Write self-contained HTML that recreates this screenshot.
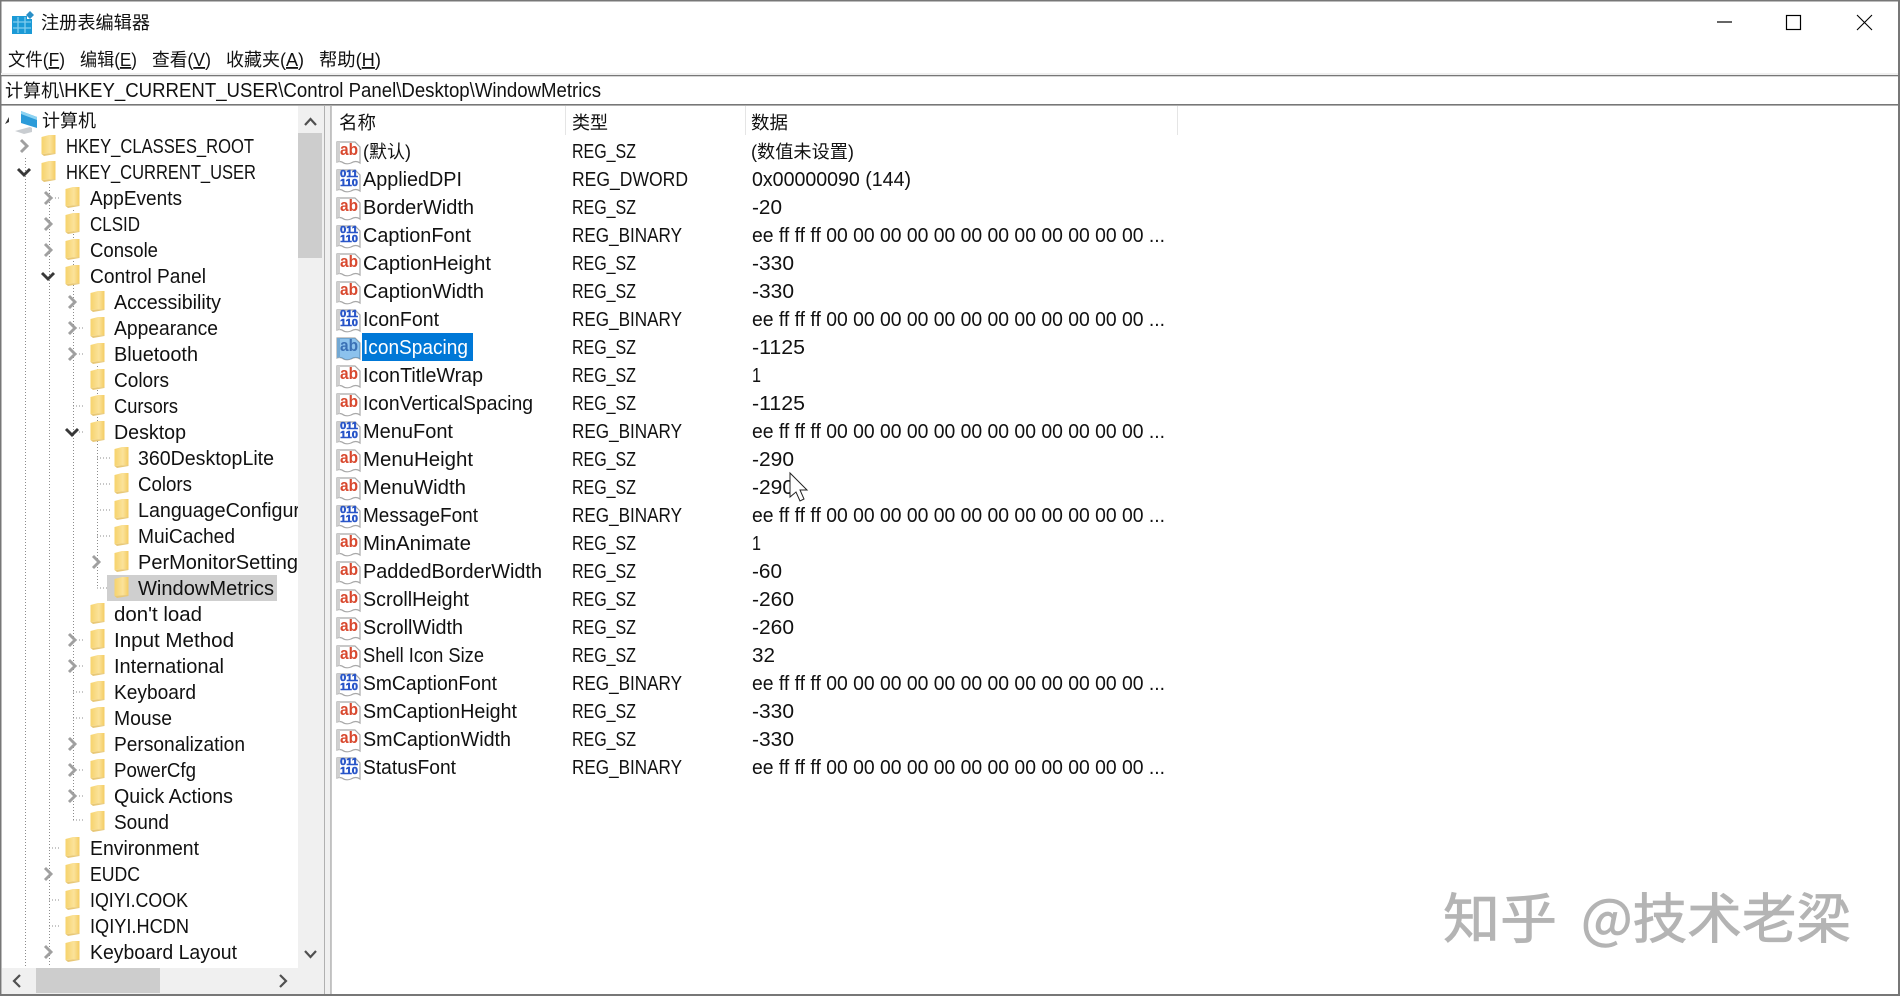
<!DOCTYPE html>
<html lang="zh"><head><meta charset="utf-8"><title>注册表编辑器</title>
<style>
html,body{margin:0;padding:0;width:1900px;height:996px;overflow:hidden;background:#fff}
svg{display:block;font-family:"Liberation Sans","Noto Sans CJK SC",sans-serif;font-size:20px;fill:#111}
.c{font-size:18px;font-family:"Noto Sans CJK SC","Liberation Sans",sans-serif}
.m{font-size:18px}
.ab{font-size:17px;font-weight:bold;fill:#d8482e}
.bi{font-size:10.5px;font-weight:bold;fill:#2855c8;stroke:#2855c8;stroke-width:.5}
</style></head><body>
<svg xmlns="http://www.w3.org/2000/svg" width="1900" height="996" viewBox="0 0 1900 996">
<defs>
<linearGradient id="g" x1="0" x2="1" y1="0" y2="0"><stop offset="0" stop-color="#f6d36c"/><stop offset=".6" stop-color="#fbe29a"/><stop offset="1" stop-color="#f4cc62"/></linearGradient>
<symbol id="f" width="16" height="24" viewBox="0 1 16 24"><path d="M0.5 4 L8 2 L14.5 2 L14.5 20 L0.5 21 Z" fill="url(#g)"/><path d="M0.5 21 L14.5 20 L14.5 21 L3 23 Z" fill="#e8c877"/></symbol>
<symbol id="cc" width="14" height="16" viewBox="0 0 14 16"><path d="M4 2 L10 8 L4 14" fill="none" stroke="#a0a0a0" stroke-width="2.9"/></symbol>
<symbol id="co" width="16" height="12" viewBox="0 0 16 12"><path d="M2 3 L8 9 L14 3" fill="none" stroke="#383838" stroke-width="2.9"/></symbol>
<symbol id="p" width="26" height="26" viewBox="0 0 26 26"><path d="M1 3 H19 L24 8 V24 Q20 21 15 24 Q10 26 6 23 Q3 22 1 23 Z" fill="#fff" stroke="#a8a8a8" stroke-width="1.2"/><path d="M1 3 V23 Q3 22 4 23 V3 Z" fill="#d0d0d0"/></symbol>
</defs>

<!-- frame -->
<rect x="0" y="0" width="1900" height="1.5" fill="#777"/>
<rect x="0" y="0" width="1.5" height="996" fill="#777"/>
<rect x="1898" y="0" width="2" height="996" fill="#777"/>
<rect x="0" y="994" width="1900" height="2" fill="#777"/>

<!-- title -->
<rect x="12" y="16" width="20" height="18" fill="#1b9ad6"/>
<path d="M13 22H31M13 28H31M18 17V33M25 17V33" stroke="#7fcdee" stroke-width="1.3"/>
<rect x="27" y="12" width="7" height="7" fill="#fff"/>
<path d="M30 11 L34 15 L30 19 L26 15 Z" fill="#2a8fc7"/>
<text class="c" x="41" y="29" textLength="109" lengthAdjust="spacingAndGlyphs">注册表编辑器</text>
<path d="M1717 22H1732" stroke="#000" stroke-width="1.2"/>
<rect x="1786.5" y="15.5" width="14" height="14" fill="none" stroke="#000" stroke-width="1.2"/>
<path d="M1857 15L1872 30M1872 15L1857 30" stroke="#000" stroke-width="1.1"/>

<!-- menu -->
<g class="m">
<text x="8" y="66" textLength="57" lengthAdjust="spacingAndGlyphs">文件(<tspan text-decoration="underline">F</tspan>)</text>
<text x="80" y="66" textLength="57" lengthAdjust="spacingAndGlyphs">编辑(<tspan text-decoration="underline">E</tspan>)</text>
<text x="152" y="66" textLength="59" lengthAdjust="spacingAndGlyphs">查看(<tspan text-decoration="underline">V</tspan>)</text>
<text x="226" y="66" textLength="78" lengthAdjust="spacingAndGlyphs">收藏夹(<tspan text-decoration="underline">A</tspan>)</text>
<text x="319" y="66" textLength="62" lengthAdjust="spacingAndGlyphs">帮助(<tspan text-decoration="underline">H</tspan>)</text>
</g>
<rect x="1" y="73" width="1897" height="2" fill="#f0f0f0"/>
<rect x="0" y="75" width="1900" height="1.3" fill="#777"/>
<text class="c" x="5" y="97" textLength="54" lengthAdjust="spacingAndGlyphs">计算机</text>
<text x="59" y="97" textLength="542" lengthAdjust="spacingAndGlyphs">\HKEY_CURRENT_USER\Control Panel\Desktop\WindowMetrics</text>
<rect x="0" y="104" width="1900" height="1.6" fill="#777"/>

<!-- divider -->
<rect x="324" y="106" width="7" height="888" fill="#f0f0f0"/>
<rect x="324" y="106" width="1" height="888" fill="#b0b0b0"/>
<rect x="330.5" y="106" width="1" height="888" fill="#909090"/>

<!-- tree lines -->
<g fill="none" stroke="#8c8c8c" stroke-width="1" stroke-dasharray="1 2">
<path d="M25.5 158V966M49.5 184V966M73.5 210V820M97.5 366V588"/>
<path d="M73 328H85M73 354H85M73 406H85M73 432H85M73 640H85M73 692H85M73 718H85M73 770H85M73 796H85M73 820H85M49 848H61M49 900H61M49 926H61M97 458H110M97 484H110M97 510H110M97 536H110M97 588H110M73 666H85"/>
<path d="M49 198H61"/>
</g>

<!-- selection tree -->
<rect x="107" y="575" width="170" height="26" fill="#cfcfcf"/>

<!-- tree root -->
<path d="M5 124 L9 117 L9 122 Z" fill="#333"/>
<path d="M21 111 L37 117 L37 128 L21 123 Z" fill="#2b9bd9"/>
<path d="M21 111 L37 117 L37 120 L21 114 Z" fill="#8dd3f2"/>
<path d="M30 127 L32 128 L32 132 L24 134 L15 131 L26 128Z" fill="#c9cdd1"/>
<text class="c" x="42" y="127" textLength="54" lengthAdjust="spacingAndGlyphs">计算机</text>

<!-- tree chevrons -->
<use href="#cc" x="17" y="138"/>
<use href="#co" x="16" y="166"/>
<use href="#cc" x="41" y="190"/>
<use href="#cc" x="41" y="216"/>
<use href="#cc" x="41" y="242"/>
<use href="#co" x="40" y="270"/>
<use href="#cc" x="65" y="294"/>
<use href="#cc" x="65" y="320"/>
<use href="#cc" x="65" y="346"/>
<use href="#co" x="64" y="426"/>
<use href="#cc" x="89" y="554"/>
<use href="#cc" x="65" y="632"/>
<use href="#cc" x="65" y="658"/>
<use href="#cc" x="65" y="736"/>
<use href="#cc" x="65" y="762"/>
<use href="#cc" x="65" y="788"/>
<use href="#cc" x="41" y="866"/>
<use href="#cc" x="41" y="944"/>

<!-- tree folders -->
<use href="#f" x="41" y="134"/><use href="#f" x="41" y="160"/>
<use href="#f" x="65" y="186"/><use href="#f" x="65" y="212"/><use href="#f" x="65" y="238"/><use href="#f" x="65" y="264"/>
<use href="#f" x="90" y="290"/><use href="#f" x="90" y="316"/><use href="#f" x="90" y="342"/><use href="#f" x="90" y="368"/><use href="#f" x="90" y="394"/><use href="#f" x="90" y="420"/>
<use href="#f" x="114" y="446"/><use href="#f" x="114" y="472"/><use href="#f" x="114" y="498"/><use href="#f" x="114" y="524"/><use href="#f" x="114" y="550"/><use href="#f" x="114" y="576"/>
<use href="#f" x="90" y="602"/><use href="#f" x="90" y="628"/><use href="#f" x="90" y="654"/><use href="#f" x="90" y="680"/><use href="#f" x="90" y="706"/><use href="#f" x="90" y="732"/><use href="#f" x="90" y="758"/><use href="#f" x="90" y="784"/><use href="#f" x="90" y="810"/>
<use href="#f" x="65" y="836"/><use href="#f" x="65" y="862"/><use href="#f" x="65" y="888"/><use href="#f" x="65" y="914"/><use href="#f" x="65" y="940"/>

<!-- tree text -->
<text x="66" y="153" textLength="188" lengthAdjust="spacingAndGlyphs">HKEY_CLASSES_ROOT</text>
<text x="66" y="179" textLength="190" lengthAdjust="spacingAndGlyphs">HKEY_CURRENT_USER</text>
<text x="90" y="205" textLength="92" lengthAdjust="spacingAndGlyphs">AppEvents</text>
<text x="90" y="231" textLength="50" lengthAdjust="spacingAndGlyphs">CLSID</text>
<text x="90" y="257" textLength="68" lengthAdjust="spacingAndGlyphs">Console</text>
<text x="90" y="283" textLength="116" lengthAdjust="spacingAndGlyphs">Control Panel</text>
<text x="114" y="309" textLength="107" lengthAdjust="spacingAndGlyphs">Accessibility</text>
<text x="114" y="335" textLength="104" lengthAdjust="spacingAndGlyphs">Appearance</text>
<text x="114" y="361" textLength="84" lengthAdjust="spacingAndGlyphs">Bluetooth</text>
<text x="114" y="387" textLength="55" lengthAdjust="spacingAndGlyphs">Colors</text>
<text x="114" y="413" textLength="64" lengthAdjust="spacingAndGlyphs">Cursors</text>
<text x="114" y="439" textLength="72" lengthAdjust="spacingAndGlyphs">Desktop</text>
<text x="138" y="465" textLength="136" lengthAdjust="spacingAndGlyphs">360DesktopLite</text>
<text x="138" y="491" textLength="54" lengthAdjust="spacingAndGlyphs">Colors</text>
<text x="138" y="517" textLength="162" lengthAdjust="spacingAndGlyphs">LanguageConfigur</text>
<text x="138" y="543" textLength="97" lengthAdjust="spacingAndGlyphs">MuiCached</text>
<text x="138" y="569" textLength="160" lengthAdjust="spacingAndGlyphs">PerMonitorSetting</text>
<text x="138" y="595" textLength="136" lengthAdjust="spacingAndGlyphs">WindowMetrics</text>
<text x="114" y="621" textLength="88" lengthAdjust="spacingAndGlyphs">don't load</text>
<text x="114" y="647" textLength="120" lengthAdjust="spacingAndGlyphs">Input Method</text>
<text x="114" y="673" textLength="110" lengthAdjust="spacingAndGlyphs">International</text>
<text x="114" y="699" textLength="82" lengthAdjust="spacingAndGlyphs">Keyboard</text>
<text x="114" y="725" textLength="58" lengthAdjust="spacingAndGlyphs">Mouse</text>
<text x="114" y="751" textLength="131" lengthAdjust="spacingAndGlyphs">Personalization</text>
<text x="114" y="777" textLength="82" lengthAdjust="spacingAndGlyphs">PowerCfg</text>
<text x="114" y="803" textLength="119" lengthAdjust="spacingAndGlyphs">Quick Actions</text>
<text x="114" y="829" textLength="55" lengthAdjust="spacingAndGlyphs">Sound</text>
<text x="90" y="855" textLength="109" lengthAdjust="spacingAndGlyphs">Environment</text>
<text x="90" y="881" textLength="50" lengthAdjust="spacingAndGlyphs">EUDC</text>
<text x="90" y="907" textLength="98" lengthAdjust="spacingAndGlyphs">IQIYI.COOK</text>
<text x="90" y="933" textLength="99" lengthAdjust="spacingAndGlyphs">IQIYI.HCDN</text>
<text x="90" y="959" textLength="147" lengthAdjust="spacingAndGlyphs">Keyboard Layout</text>

<!-- scrollbars -->
<rect x="298" y="106" width="26" height="862" fill="#f0f0f0"/>
<rect x="298" y="133" width="24" height="125" fill="#cdcdcd"/>
<path d="M305 125 L310.5 119 L316 125" fill="none" stroke="#505050" stroke-width="2.2"/>
<path d="M305 951 L310.5 957 L316 951" fill="none" stroke="#505050" stroke-width="2.2"/>
<rect x="2" y="968" width="322" height="26" fill="#f0f0f0"/>
<rect x="36" y="968" width="124" height="25" fill="#cdcdcd"/>
<path d="M20 975 L14 981 L20 987" fill="none" stroke="#505050" stroke-width="2.2"/>
<path d="M280 975 L286 981 L280 987" fill="none" stroke="#505050" stroke-width="2.2"/>

<!-- list header -->
<path d="M565.5 106V135M745.5 106V135M1177.5 106V135" stroke="#e5e5e5"/>
<text class="c" x="339" y="129" textLength="37" lengthAdjust="spacingAndGlyphs">名称</text>
<text class="c" x="572" y="129" textLength="36" lengthAdjust="spacingAndGlyphs">类型</text>
<text class="c" x="751" y="129" textLength="37" lengthAdjust="spacingAndGlyphs">数据</text>

<!-- selected row -->
<rect x="362" y="333" width="111" height="28" fill="#0078d7"/>

<!-- list icons -->
<g>
<use href="#p" x="336" y="139"/><text class="ab" x="340" y="155" textLength="18" lengthAdjust="spacingAndGlyphs">ab</text>
<use href="#p" x="336" y="167"/><text class="bi" x="340" y="177" textLength="18" lengthAdjust="spacingAndGlyphs">011</text><text class="bi" x="340" y="186" textLength="18" lengthAdjust="spacingAndGlyphs">110</text>
<use href="#p" x="336" y="195"/><text class="ab" x="340" y="211" textLength="18" lengthAdjust="spacingAndGlyphs">ab</text>
<use href="#p" x="336" y="223"/><text class="bi" x="340" y="233" textLength="18" lengthAdjust="spacingAndGlyphs">011</text><text class="bi" x="340" y="242" textLength="18" lengthAdjust="spacingAndGlyphs">110</text>
<use href="#p" x="336" y="251"/><text class="ab" x="340" y="267" textLength="18" lengthAdjust="spacingAndGlyphs">ab</text>
<use href="#p" x="336" y="279"/><text class="ab" x="340" y="295" textLength="18" lengthAdjust="spacingAndGlyphs">ab</text>
<use href="#p" x="336" y="307"/><text class="bi" x="340" y="317" textLength="18" lengthAdjust="spacingAndGlyphs">011</text><text class="bi" x="340" y="326" textLength="18" lengthAdjust="spacingAndGlyphs">110</text>
<use href="#p" x="336" y="335"/><text class="ab" x="340" y="351" textLength="18" lengthAdjust="spacingAndGlyphs" style="fill:#6a6a9a">ab</text>
<path d="M337 338 H355 L360 343 V359 Q356 356 351 359 Q346 361 342 358 Q339 357 337 358 Z" fill="#0078d7" opacity=".45"/>
<use href="#p" x="336" y="363"/><text class="ab" x="340" y="379" textLength="18" lengthAdjust="spacingAndGlyphs">ab</text>
<use href="#p" x="336" y="391"/><text class="ab" x="340" y="407" textLength="18" lengthAdjust="spacingAndGlyphs">ab</text>
<use href="#p" x="336" y="419"/><text class="bi" x="340" y="429" textLength="18" lengthAdjust="spacingAndGlyphs">011</text><text class="bi" x="340" y="438" textLength="18" lengthAdjust="spacingAndGlyphs">110</text>
<use href="#p" x="336" y="447"/><text class="ab" x="340" y="463" textLength="18" lengthAdjust="spacingAndGlyphs">ab</text>
<use href="#p" x="336" y="475"/><text class="ab" x="340" y="491" textLength="18" lengthAdjust="spacingAndGlyphs">ab</text>
<use href="#p" x="336" y="503"/><text class="bi" x="340" y="513" textLength="18" lengthAdjust="spacingAndGlyphs">011</text><text class="bi" x="340" y="522" textLength="18" lengthAdjust="spacingAndGlyphs">110</text>
<use href="#p" x="336" y="531"/><text class="ab" x="340" y="547" textLength="18" lengthAdjust="spacingAndGlyphs">ab</text>
<use href="#p" x="336" y="559"/><text class="ab" x="340" y="575" textLength="18" lengthAdjust="spacingAndGlyphs">ab</text>
<use href="#p" x="336" y="587"/><text class="ab" x="340" y="603" textLength="18" lengthAdjust="spacingAndGlyphs">ab</text>
<use href="#p" x="336" y="615"/><text class="ab" x="340" y="631" textLength="18" lengthAdjust="spacingAndGlyphs">ab</text>
<use href="#p" x="336" y="643"/><text class="ab" x="340" y="659" textLength="18" lengthAdjust="spacingAndGlyphs">ab</text>
<use href="#p" x="336" y="671"/><text class="bi" x="340" y="681" textLength="18" lengthAdjust="spacingAndGlyphs">011</text><text class="bi" x="340" y="690" textLength="18" lengthAdjust="spacingAndGlyphs">110</text>
<use href="#p" x="336" y="699"/><text class="ab" x="340" y="715" textLength="18" lengthAdjust="spacingAndGlyphs">ab</text>
<use href="#p" x="336" y="727"/><text class="ab" x="340" y="743" textLength="18" lengthAdjust="spacingAndGlyphs">ab</text>
<use href="#p" x="336" y="755"/><text class="bi" x="340" y="765" textLength="18" lengthAdjust="spacingAndGlyphs">011</text><text class="bi" x="340" y="774" textLength="18" lengthAdjust="spacingAndGlyphs">110</text>
</g>

<!-- names -->
<text class="m" x="363" y="158" textLength="48" lengthAdjust="spacingAndGlyphs">(默认)</text>
<text x="363" y="186" textLength="99" lengthAdjust="spacingAndGlyphs">AppliedDPI</text>
<text x="363" y="214" textLength="111" lengthAdjust="spacingAndGlyphs">BorderWidth</text>
<text x="363" y="242" textLength="108" lengthAdjust="spacingAndGlyphs">CaptionFont</text>
<text x="363" y="270" textLength="128" lengthAdjust="spacingAndGlyphs">CaptionHeight</text>
<text x="363" y="298" textLength="121" lengthAdjust="spacingAndGlyphs">CaptionWidth</text>
<text x="363" y="326" textLength="76" lengthAdjust="spacingAndGlyphs">IconFont</text>
<text x="363" y="354" textLength="105" lengthAdjust="spacingAndGlyphs" style="fill:#fff">IconSpacing</text>
<text x="363" y="382" textLength="120" lengthAdjust="spacingAndGlyphs">IconTitleWrap</text>
<text x="363" y="410" textLength="170" lengthAdjust="spacingAndGlyphs">IconVerticalSpacing</text>
<text x="363" y="438" textLength="90" lengthAdjust="spacingAndGlyphs">MenuFont</text>
<text x="363" y="466" textLength="110" lengthAdjust="spacingAndGlyphs">MenuHeight</text>
<text x="363" y="494" textLength="103" lengthAdjust="spacingAndGlyphs">MenuWidth</text>
<text x="363" y="522" textLength="115" lengthAdjust="spacingAndGlyphs">MessageFont</text>
<text x="363" y="550" textLength="108" lengthAdjust="spacingAndGlyphs">MinAnimate</text>
<text x="363" y="578" textLength="179" lengthAdjust="spacingAndGlyphs">PaddedBorderWidth</text>
<text x="363" y="606" textLength="106" lengthAdjust="spacingAndGlyphs">ScrollHeight</text>
<text x="363" y="634" textLength="100" lengthAdjust="spacingAndGlyphs">ScrollWidth</text>
<text x="363" y="662" textLength="121" lengthAdjust="spacingAndGlyphs">Shell Icon Size</text>
<text x="363" y="690" textLength="134" lengthAdjust="spacingAndGlyphs">SmCaptionFont</text>
<text x="363" y="718" textLength="154" lengthAdjust="spacingAndGlyphs">SmCaptionHeight</text>
<text x="363" y="746" textLength="148" lengthAdjust="spacingAndGlyphs">SmCaptionWidth</text>
<text x="363" y="774" textLength="93" lengthAdjust="spacingAndGlyphs">StatusFont</text>

<!-- types -->
<text x="572" y="158" textLength="64" lengthAdjust="spacingAndGlyphs">REG_SZ</text>
<text x="572" y="186" textLength="116" lengthAdjust="spacingAndGlyphs">REG_DWORD</text>
<text x="572" y="214" textLength="64" lengthAdjust="spacingAndGlyphs">REG_SZ</text>
<text x="572" y="242" textLength="110" lengthAdjust="spacingAndGlyphs">REG_BINARY</text>
<text x="572" y="270" textLength="64" lengthAdjust="spacingAndGlyphs">REG_SZ</text>
<text x="572" y="298" textLength="64" lengthAdjust="spacingAndGlyphs">REG_SZ</text>
<text x="572" y="326" textLength="110" lengthAdjust="spacingAndGlyphs">REG_BINARY</text>
<text x="572" y="354" textLength="64" lengthAdjust="spacingAndGlyphs">REG_SZ</text>
<text x="572" y="382" textLength="64" lengthAdjust="spacingAndGlyphs">REG_SZ</text>
<text x="572" y="410" textLength="64" lengthAdjust="spacingAndGlyphs">REG_SZ</text>
<text x="572" y="438" textLength="110" lengthAdjust="spacingAndGlyphs">REG_BINARY</text>
<text x="572" y="466" textLength="64" lengthAdjust="spacingAndGlyphs">REG_SZ</text>
<text x="572" y="494" textLength="64" lengthAdjust="spacingAndGlyphs">REG_SZ</text>
<text x="572" y="522" textLength="110" lengthAdjust="spacingAndGlyphs">REG_BINARY</text>
<text x="572" y="550" textLength="64" lengthAdjust="spacingAndGlyphs">REG_SZ</text>
<text x="572" y="578" textLength="64" lengthAdjust="spacingAndGlyphs">REG_SZ</text>
<text x="572" y="606" textLength="64" lengthAdjust="spacingAndGlyphs">REG_SZ</text>
<text x="572" y="634" textLength="64" lengthAdjust="spacingAndGlyphs">REG_SZ</text>
<text x="572" y="662" textLength="64" lengthAdjust="spacingAndGlyphs">REG_SZ</text>
<text x="572" y="690" textLength="110" lengthAdjust="spacingAndGlyphs">REG_BINARY</text>
<text x="572" y="718" textLength="64" lengthAdjust="spacingAndGlyphs">REG_SZ</text>
<text x="572" y="746" textLength="64" lengthAdjust="spacingAndGlyphs">REG_SZ</text>
<text x="572" y="774" textLength="110" lengthAdjust="spacingAndGlyphs">REG_BINARY</text>

<!-- data -->
<text class="m" x="751" y="158" textLength="103" lengthAdjust="spacingAndGlyphs">(数值未设置)</text>
<text x="752" y="186" textLength="159" lengthAdjust="spacingAndGlyphs">0x00000090 (144)</text>
<text x="752" y="214" textLength="30" lengthAdjust="spacingAndGlyphs">-20</text>
<text x="752" y="242" textLength="413" lengthAdjust="spacingAndGlyphs">ee ff ff ff 00 00 00 00 00 00 00 00 00 00 00 00 ...</text>
<text x="752" y="270" textLength="42" lengthAdjust="spacingAndGlyphs">-330</text>
<text x="752" y="298" textLength="42" lengthAdjust="spacingAndGlyphs">-330</text>
<text x="752" y="326" textLength="413" lengthAdjust="spacingAndGlyphs">ee ff ff ff 00 00 00 00 00 00 00 00 00 00 00 00 ...</text>
<text x="752" y="354" textLength="53" lengthAdjust="spacingAndGlyphs">-1125</text>
<text x="752" y="382" textLength="9" lengthAdjust="spacingAndGlyphs">1</text>
<text x="752" y="410" textLength="53" lengthAdjust="spacingAndGlyphs">-1125</text>
<text x="752" y="438" textLength="413" lengthAdjust="spacingAndGlyphs">ee ff ff ff 00 00 00 00 00 00 00 00 00 00 00 00 ...</text>
<text x="752" y="466" textLength="42" lengthAdjust="spacingAndGlyphs">-290</text>
<text x="752" y="494" textLength="42" lengthAdjust="spacingAndGlyphs">-290</text>
<text x="752" y="522" textLength="413" lengthAdjust="spacingAndGlyphs">ee ff ff ff 00 00 00 00 00 00 00 00 00 00 00 00 ...</text>
<text x="752" y="550" textLength="9" lengthAdjust="spacingAndGlyphs">1</text>
<text x="752" y="578" textLength="30" lengthAdjust="spacingAndGlyphs">-60</text>
<text x="752" y="606" textLength="42" lengthAdjust="spacingAndGlyphs">-260</text>
<text x="752" y="634" textLength="42" lengthAdjust="spacingAndGlyphs">-260</text>
<text x="752" y="662" textLength="23" lengthAdjust="spacingAndGlyphs">32</text>
<text x="752" y="690" textLength="413" lengthAdjust="spacingAndGlyphs">ee ff ff ff 00 00 00 00 00 00 00 00 00 00 00 00 ...</text>
<text x="752" y="718" textLength="42" lengthAdjust="spacingAndGlyphs">-330</text>
<text x="752" y="746" textLength="42" lengthAdjust="spacingAndGlyphs">-330</text>
<text x="752" y="774" textLength="413" lengthAdjust="spacingAndGlyphs">ee ff ff ff 00 00 00 00 00 00 00 00 00 00 00 00 ...</text>

<!-- cursor -->
<path d="M790 473 L790 497 L796 492 L800 501 L804 499 L800 490 L807 490 Z" fill="#fff" stroke="#222" stroke-width="1"/>

<!-- watermark -->
<text x="1443" y="938" textLength="114" lengthAdjust="spacingAndGlyphs" style="font-size:54px;fill:#b4b4b4;font-family:'Noto Sans CJK SC',sans-serif;stroke:#b4b4b4;stroke-width:.8">知乎</text>
<text x="1581" y="938" textLength="270" lengthAdjust="spacingAndGlyphs" style="font-size:54px;fill:#b4b4b4;font-family:'Noto Sans CJK SC',sans-serif;stroke:#b4b4b4;stroke-width:.8">@技术老梁</text>
</svg>
</body></html>
